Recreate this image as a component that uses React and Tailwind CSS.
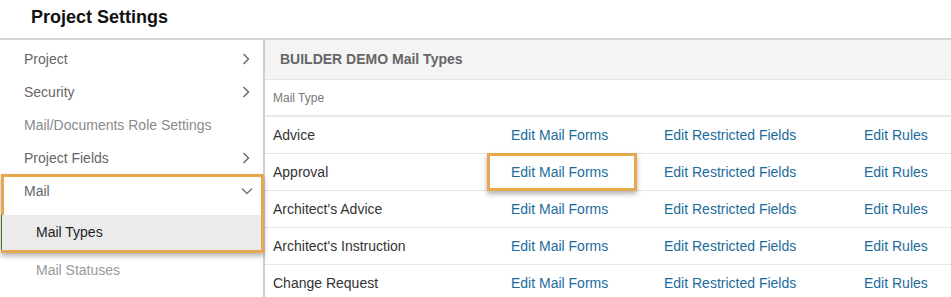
import React from 'react'

const font = { fontFamily: '"Liberation Sans", Arial, sans-serif' }

function ChevronRight() {
    return (
        <svg width="8" height="12" viewBox="0 0 8 12" className="text-[#666]">
            <path d="M1.5 1 L6.5 6 L1.5 11" fill="none" stroke="currentColor" strokeWidth="1.4" />
        </svg>
    )
}

function ChevronDown() {
    return (
        <svg width="12" height="8" viewBox="0 0 12 8" className="text-[#777]">
            <path d="M1 1.5 L6 6.5 L11 1.5" fill="none" stroke="currentColor" strokeWidth="1.4" />
        </svg>
    )
}

function NavItem({ label, h, chevron, muted }) {
    return (
        <div className={"flex items-center justify-between pl-[24px] pr-[13px] text-[14px] " + h + (muted ? " text-[#8a8a8a]" : " text-[#666]")}>
            <span>{label}</span>
            {chevron && <ChevronRight />}
        </div>
    )
}

const mailTypes = ["Advice", "Approval", "Architect's Advice", "Architect's Instruction", "Change Request"]

export default function App() {
    return (
        <div className="w-[951px] h-[297px] overflow-hidden bg-white" style={font}>
            <div className="h-[40px] flex items-center pl-[31px] border-b-2 border-[#d4d4d4]">
                <h1 className="font-bold text-[18px] text-[#111] pb-[4px]">Project Settings</h1>
            </div>
            <div className="flex h-[257px]">
                <aside className="w-[265px] shrink-0 pt-[2px] border-r-[2px] border-[#cdcdcd]">
                    <NavItem label="Project" h="h-[34px]" chevron />
                    <NavItem label="Security" h="h-[32px]" chevron />
                    <NavItem label="Mail/Documents Role Settings" h="h-[34px]" muted />
                    <NavItem label="Project Fields" h="h-[32px]" chevron />
                    <div className="ml-[1px] w-[263px] relative z-10 border-[3px] border-[#e6a84f] shadow-[0_3px_5px_rgba(0,0,0,0.3)] bg-white">
                        <div className="flex items-center justify-between pl-[20px] pr-[8px] h-[28px] mb-[10px] text-[14px] text-[#666]">
                            <span>Mail</span>
                            <ChevronDown />
                        </div>
                        <div className="h-[35px] flex items-center bg-[#ebebeb] text-[14px] text-[#222] border-l border-[#3d6b2f] -ml-[3px] pl-[34px]">
                            Mail Types
                        </div>
                    </div>
                    <div className="h-[34px] flex items-center pl-[36px] text-[14px] text-[#999]">Mail Statuses</div>
                </aside>
                <main className="flex-1">
                    <div className="h-[40px] bg-[#f4f4f4] border-b border-[#e4e4e4] flex items-center pl-[15px]">
                        <h2 className="font-bold text-[14px] text-[#666]">BUILDER DEMO Mail Types</h2>
                    </div>
                    <div className="h-[37px] border-b-2 border-[#e8e8e8] flex items-center pl-[8px] text-[12px] text-[#777]">Mail Type</div>
                    {mailTypes.map((t, i) => (
                        <div key={t} className="grid grid-cols-[238px_153px_200px_1fr] h-[37px] border-b border-[#e6e6e6] text-[14px]">
                            <div className="flex items-center pl-[8px] text-[#333]">{t}</div>
                            <div className="flex items-center pl-[8px] text-[#1b6c9b] relative">
                                Edit Mail Forms
                                {i === 1 && (
                                    <div className="absolute left-[-16px] top-[-1px] w-[150px] h-[38px] border-[3px] border-[#e6a84f] shadow-[0_3px_5px_rgba(0,0,0,0.3)]" />
                                )}
                            </div>
                            <div className="flex items-center pl-[8px] text-[#1b6c9b]">Edit Restricted Fields</div>
                            <div className="flex items-center pl-[8px] text-[#1b6c9b]">Edit Rules</div>
                        </div>
                    ))}
                </main>
            </div>
        </div>
    )
}
